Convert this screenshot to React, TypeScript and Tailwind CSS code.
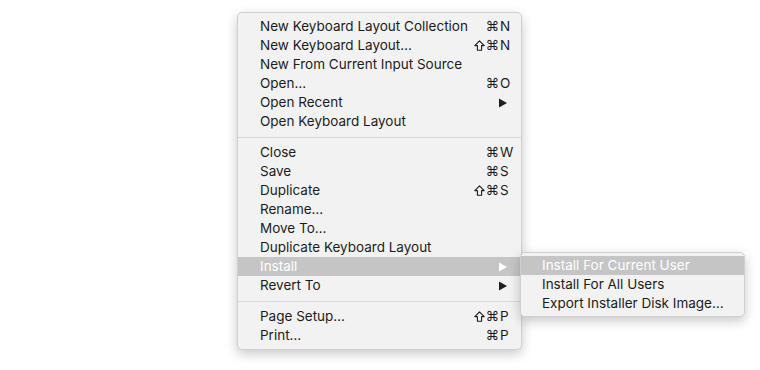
import React from 'react';

type Item = {
  label: string;
  shift?: boolean;
  keyChar?: string;
  sub?: boolean;
  active?: boolean;
};

type Entry = Item | 'sep';

const mainMenu: Entry[] = [
  { label: 'New Keyboard Layout Collection', keyChar: 'N' },
  { label: 'New Keyboard Layout…', shift: true, keyChar: 'N' },
  { label: 'New From Current Input Source' },
  { label: 'Open…', keyChar: 'O' },
  { label: 'Open Recent', sub: true },
  { label: 'Open Keyboard Layout' },
  'sep',
  { label: 'Close', keyChar: 'W' },
  { label: 'Save', keyChar: 'S' },
  { label: 'Duplicate', shift: true, keyChar: 'S' },
  { label: 'Rename…' },
  { label: 'Move To…' },
  { label: 'Duplicate Keyboard Layout' },
  { label: 'Install', sub: true, active: true },
  { label: 'Revert To', sub: true },
  'sep',
  { label: 'Page Setup…', shift: true, keyChar: 'P' },
  { label: 'Print…', keyChar: 'P' },
];

const installMenu: Item[] = [
  { label: 'Install For Current User', active: true },
  { label: 'Install For All Users' },
  { label: 'Export Installer Disk Image…' },
];

function Arrow({ light }: { light?: boolean }) {
  return (
    <svg width="8" height="10" viewBox="0 0 8 10" className="mr-[4px]">
      <path d="M0 0.5 L8 5 L0 9.5 Z" fill={light ? '#ffffff' : '#1f1f1f'} />
    </svg>
  );
}

function ShiftIcon() {
  return (
    <svg width="11" height="11" viewBox="0 0 11 11" className="mr-[1px]">
      <path
        d="M5.5 0.8 L10.2 5.6 L7.6 5.6 L7.6 10.2 L3.4 10.2 L3.4 5.6 L0.8 5.6 Z"
        fill="none"
        stroke="#1c1c1c"
        strokeWidth="1.1"
        strokeLinejoin="round"
      />
    </svg>
  );
}

function Row({ item, padLeft }: { item: Item; padLeft: string }) {
  return (
    <div
      className={`flex h-[19px] items-center pr-[10px] ${padLeft} ${
        item.active ? 'bg-[#c5c5c5] text-white' : 'text-[#1c1c1c]'
      }`}
    >
      <span className="flex-1 whitespace-nowrap">{item.label}</span>
      {item.keyChar && (
        <span className="flex items-center">
          {item.shift && <ShiftIcon />}
          <span className="font-['DejaVu_Sans',sans-serif] text-[13.5px]">⌘</span>
          <span className="w-[12px] pl-[1px] text-left">{item.keyChar}</span>
        </span>
      )}
      {item.sub && <Arrow light={item.active} />}
    </div>
  );
}

export default function App() {
  return (
    <div className="h-[370px] w-[760px] bg-white font-['Inter',sans-serif] text-[13.5px] leading-none">
      <div className="relative ml-[237px] w-[285px] pt-[12px]">
        {/* main File menu */}
        <div className="rounded-[5px] border border-[#cfcfcf] bg-[#f2f2f2] py-[4px] shadow-[0_4px_12px_rgba(0,0,0,0.22)]">
          {mainMenu.map((e, i) =>
            e === 'sep' ? (
              <div key={i} className="flex h-[12px] items-center">
                <div className="h-px w-full bg-[#dadada]" />
              </div>
            ) : (
              <Row key={i} item={e} padLeft="pl-[22px]" />
            )
          )}
        </div>

        {/* Install submenu */}
        <div className="absolute left-[283px] top-[252px] w-[225px] rounded-[5px] border border-[#cfcfcf] bg-[#f2f2f2] py-[3px] shadow-[0_4px_12px_rgba(0,0,0,0.22)]">
          {installMenu.map((it, i) => (
            <Row key={i} item={it} padLeft="pl-[21px]" />
          ))}
        </div>
      </div>
    </div>
  );
}
